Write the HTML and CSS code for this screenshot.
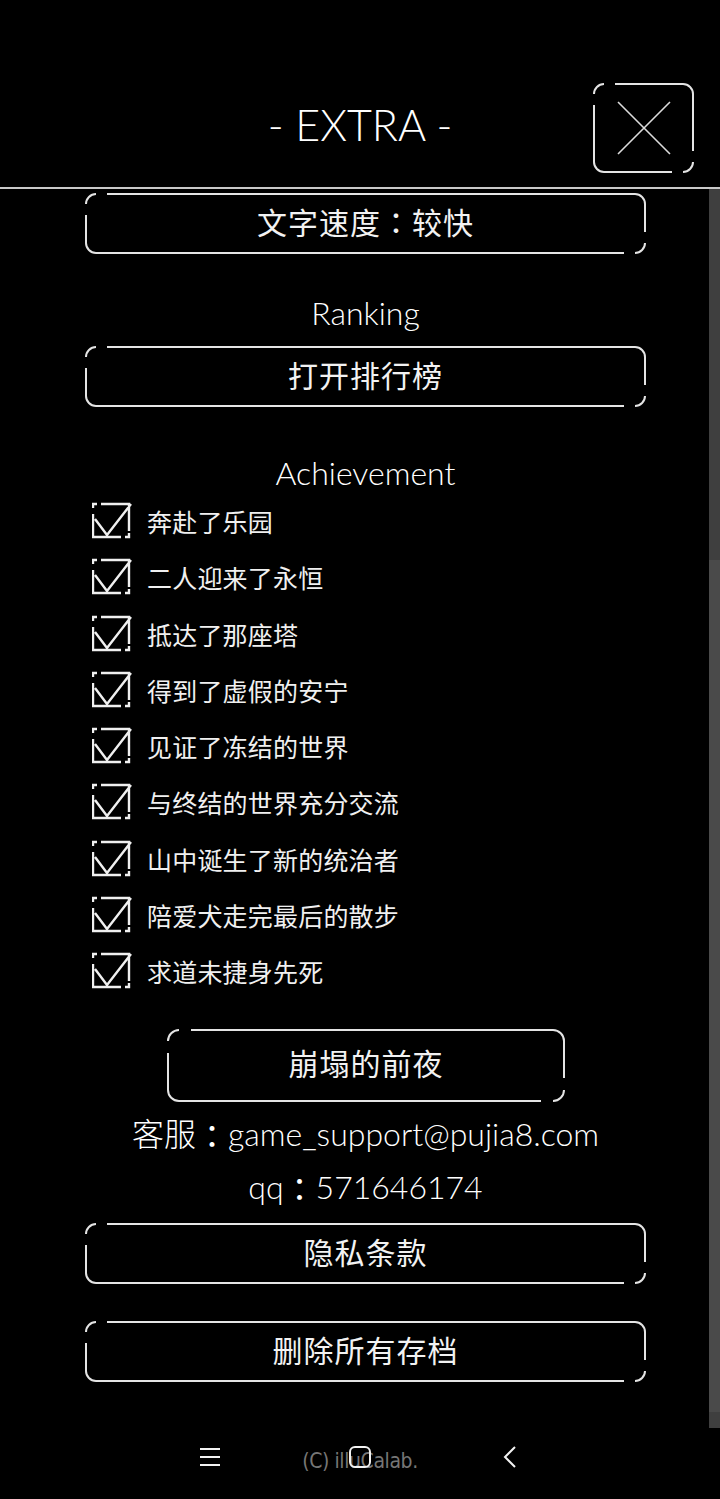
FILE: index.html
```html
<!DOCTYPE html>
<html lang="zh">
<head>
<meta charset="utf-8">
<title>EXTRA</title>
<link rel="stylesheet" href="styles.css">
</head>
<body>
<header class="top">
  <div class="spacer"></div>
  <h1 class="title">- EXTRA -</h1>
  <button class="close frame" aria-label="close">
    <svg width="54" height="54" viewBox="0 0 54 54"><path d="M1 1 L53 53 M53 1 L1 53" stroke="#dcdcdc" stroke-width="1.6" fill="none"/></svg>
  </button>
</header>
<div class="rule"></div>
<main class="viewport">
  <div class="content">
    <div class="btn frame wide">文字速度<span class="colon">：</span>较快</div>
    <div class="label label-ranking">Ranking</div>
    <div class="btn frame wide btn-rank">打开排行榜</div>
    <div class="label label-ach">Achievement</div>
    <ul class="checks">
      <li class="check"><svg class="box" width="40" height="40" viewBox="0 0 40 40"><path d="M1 6V2H5M9 2H37V29M1 12V35H29M33 35H37V31M3 17L15 33L39 2" fill="none" stroke="#f0f0f0" stroke-width="2.4"/></svg><span>奔赴了乐园</span></li>
      <li class="check"><svg class="box" width="40" height="40" viewBox="0 0 40 40"><path d="M1 6V2H5M9 2H37V29M1 12V35H29M33 35H37V31M3 17L15 33L39 2" fill="none" stroke="#f0f0f0" stroke-width="2.4"/></svg><span>二人迎来了永恒</span></li>
      <li class="check"><svg class="box" width="40" height="40" viewBox="0 0 40 40"><path d="M1 6V2H5M9 2H37V29M1 12V35H29M33 35H37V31M3 17L15 33L39 2" fill="none" stroke="#f0f0f0" stroke-width="2.4"/></svg><span>抵达了那座塔</span></li>
      <li class="check"><svg class="box" width="40" height="40" viewBox="0 0 40 40"><path d="M1 6V2H5M9 2H37V29M1 12V35H29M33 35H37V31M3 17L15 33L39 2" fill="none" stroke="#f0f0f0" stroke-width="2.4"/></svg><span>得到了虚假的安宁</span></li>
      <li class="check"><svg class="box" width="40" height="40" viewBox="0 0 40 40"><path d="M1 6V2H5M9 2H37V29M1 12V35H29M33 35H37V31M3 17L15 33L39 2" fill="none" stroke="#f0f0f0" stroke-width="2.4"/></svg><span>见证了冻结的世界</span></li>
      <li class="check"><svg class="box" width="40" height="40" viewBox="0 0 40 40"><path d="M1 6V2H5M9 2H37V29M1 12V35H29M33 35H37V31M3 17L15 33L39 2" fill="none" stroke="#f0f0f0" stroke-width="2.4"/></svg><span>与终结的世界充分交流</span></li>
      <li class="check"><svg class="box" width="40" height="40" viewBox="0 0 40 40"><path d="M1 6V2H5M9 2H37V29M1 12V35H29M33 35H37V31M3 17L15 33L39 2" fill="none" stroke="#f0f0f0" stroke-width="2.4"/></svg><span>山中诞生了新的统治者</span></li>
      <li class="check"><svg class="box" width="40" height="40" viewBox="0 0 40 40"><path d="M1 6V2H5M9 2H37V29M1 12V35H29M33 35H37V31M3 17L15 33L39 2" fill="none" stroke="#f0f0f0" stroke-width="2.4"/></svg><span>陪爱犬走完最后的散步</span></li>
      <li class="check"><svg class="box" width="40" height="40" viewBox="0 0 40 40"><path d="M1 6V2H5M9 2H37V29M1 12V35H29M33 35H37V31M3 17L15 33L39 2" fill="none" stroke="#f0f0f0" stroke-width="2.4"/></svg><span>求道未捷身先死</span></li>
    </ul>
    <div class="btn frame mid">崩塌的前夜</div>
    <div class="info info-mail">客服<span class="colon">：</span>game_support@pujia8.com</div>
    <div class="info info-qq">qq<span class="colon">：</span>571646174</div>
    <div class="btn frame wide btn-privacy">隐私条款</div>
    <div class="btn frame wide btn-delete">删除所有存档</div>
  </div>
  <div class="scrollbar"><div class="thumb"></div></div>
</main>
<footer class="footer">
  <span class="copy">(C) illuCalab.</span>
  <nav class="navbar">
    <span class="nav-item"><svg width="22" height="20" viewBox="0 0 22 20"><path d="M1 2H21M1 10H21M1 18H21" stroke="#f2f2f2" stroke-width="2" fill="none"/></svg></span>
    <span class="nav-item"><svg width="22" height="22" viewBox="0 0 22 22"><rect x="1" y="1" width="20" height="20" rx="5" stroke="#f2f2f2" stroke-width="2" fill="none"/></svg></span>
    <span class="nav-item"><svg width="14" height="24" viewBox="0 0 14 24"><path d="M12 2L2 12L12 22" stroke="#f2f2f2" stroke-width="2" fill="none"/></svg></span>
  </nav>
</footer>
</body>
</html>
```
FILE: styles.css
```css
* { box-sizing: border-box; }
html, body { margin: 0; padding: 0; }
body {
  width: 720px;
  height: 1499px;
  background: #000;
  color: #f0f0f0;
  font-family: "Lato", "Noto Sans CJK SC", sans-serif;
  overflow: hidden;
}

.top {
  height: 187px;
  padding-top: 83px;
  display: grid;
  grid-template-columns: 1fr auto 1fr;
  align-items: start;
}
.title {
  margin: 0;
  padding-top: 15px;
  font-family: "Lato", sans-serif;
  font-weight: 300;
  font-size: 43px;
  line-height: 54px;
  letter-spacing: 0;
  color: #fff;
  white-space: pre;
}
.close {
  justify-self: end;
  margin-right: 26px;
  width: 101px;
  height: 90px;
  background: #000;
  padding: 0;
  display: flex;
  align-items: center;
  justify-content: center;
  --bw: 3px;
  --co: 11px;
  --cs: 10px;
  border-radius: 13px;
}

.rule {
  height: 2px;
  background: #c9c9c9;
}

/* frame with broken corners */
.frame {
  position: relative;
  --bw: 2px;
  --co: 11px;
  --cs: 11px;
  border: var(--bw) solid #e4e4e4;
  border-radius: 11px;
}
.frame::before,
.frame::after {
  content: "";
  position: absolute;
  width: var(--cs);
  height: var(--cs);
  background: #000;
}
.frame::before {
  left: calc(var(--co) - var(--bw));
  top: calc(-1px - var(--bw));
  box-shadow: calc(-1px - var(--co)) calc(var(--co) + 1px) 0 0 #000;
}
.frame::after {
  right: calc(var(--co) - var(--bw));
  bottom: calc(-1px - var(--bw));
  box-shadow: calc(var(--co) + 1px) calc(-1px - var(--co)) 0 0 #000;
}

.colon {
  font-family: "Noto Sans CJK TC", "Noto Sans CJK SC", sans-serif;
  font-weight: 400;
}

.viewport {
  height: 1239px;
  display: flex;
  overflow: hidden;
}
.content {
  width: 709px;
  padding: 4px 0 0 85px;
}
.scrollbar {
  width: 11px;
  background: #3f3f3f;
  padding-top: 371px;
}
.thumb {
  height: 852px;
  background: #4a4a4a;
}

.btn {
  display: flex;
  align-items: center;
  justify-content: center;
  font-family: "Noto Sans CJK SC", sans-serif;
  font-size: 30px;
  letter-spacing: 1px;
  color: #f2f2f2;
}
.wide {
  width: 561px;
  height: 61px;
  padding-bottom: 6px;
}
.mid {
  width: 398px;
  height: 73px;
  margin: 30px 0 0 82px;
  padding-bottom: 7px;
  --co: 12px;
  --cs: 12px;
  border-radius: 12px;
}

.label {
  width: 561px;
  text-align: center;
  font-family: "Lato", sans-serif;
  font-weight: 300;
  font-size: 32px;
  line-height: 40px;
  color: #fff;
}
.label-ranking { margin: 39px 0 13px; }
.label-ach { margin-top: 46px; }

.checks {
  list-style: none;
  margin: 0;
  padding: 0;
}
.check {
  height: 56.25px;
  display: flex;
  align-items: center;
  font-family: "Noto Sans CJK SC", sans-serif;
  font-size: 25px;
  letter-spacing: 0.2px;
  color: #f0f0f0;
}
.box {
  margin: 2px 15px 0 7px;
  flex: none;
}

.info {
  width: 561px;
  height: 44px;
  display: flex;
  align-items: center;
  justify-content: center;
  white-space: pre;
  font-family: "Lato", "Noto Sans CJK SC", sans-serif;
  font-weight: 300;
  font-size: 32px;
  line-height: 44px;
  color: #fff;
}
.info-mail { margin-top: 10px; }
.info-qq { margin-top: 9px; }
.btn-privacy { margin-top: 14px; }
.btn-delete { margin-top: 37px; }

.footer {
  position: relative;
  height: 71px;
  display: flex;
  justify-content: center;
  padding-top: 18px;
}
.copy {
  font-family: "DejaVu Sans Condensed", "Roboto", sans-serif;
  font-stretch: condensed;
  font-size: 21px;
  line-height: 30px;
  color: #767676;
  letter-spacing: -0.4px;
}
.navbar {
  position: absolute;
  left: 0;
  right: 0;
  top: 17px;
  display: flex;
  justify-content: center;
}
.nav-item {
  width: 150px;
  height: 24px;
  display: flex;
  align-items: center;
  justify-content: center;
}
```
